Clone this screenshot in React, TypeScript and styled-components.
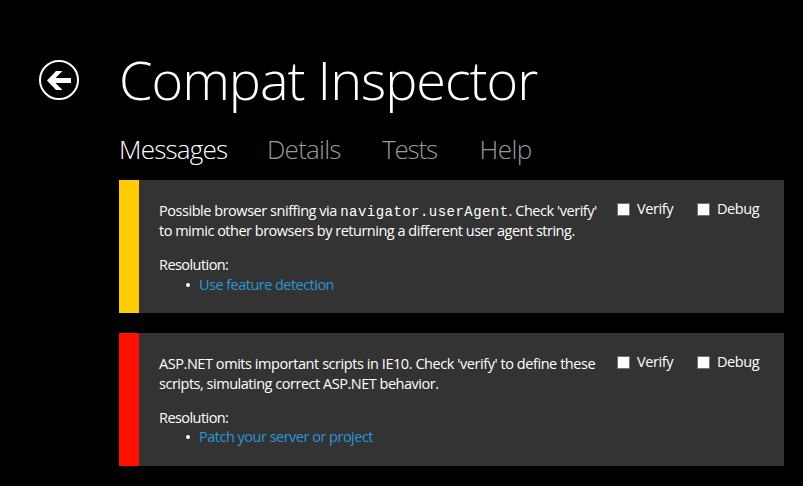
import React from 'react';
import styled, { createGlobalStyle } from 'styled-components';

const GlobalStyle = createGlobalStyle`
  * { box-sizing: border-box; }
  body {
    margin: 0;
    background: #000;
    color: #fff;
    font-family: "Open Sans", "Noto Sans", sans-serif;
    overflow: hidden;
  }
`;

const Page = styled.div`
  width: 803px;
  height: 486px;
  padding: 43px 19px 0 39px;
`;

const Header = styled.header`
  display: flex;
  height: 76px;
`;

const BackButton = styled.button`
  width: 40px;
  height: 40px;
  margin: 17px 40px 0 0;
  padding: 0;
  border: 0;
  background: none;
  color: #fff;
  svg { display: block; }
`;

const Title = styled.h1`
  margin: 0;
  font-size: 54px;
  line-height: 72px;
  font-weight: 300;
  letter-spacing: -1.02px;
  white-space: nowrap;
`;

const Main = styled.main`
  margin-left: 80px;
`;

const Tabs = styled.nav`
  display: flex;
  height: 61px;
`;

const Tab = styled.a<{ $active?: boolean; $width: number; $spacing: number }>`
  width: ${(p) => p.$width}px;
  color: ${(p) => (p.$active ? '#fff' : '#999')};
  font-size: 26px;
  line-height: 60px;
  font-weight: 300;
  letter-spacing: ${(p) => p.$spacing}px;
  white-space: nowrap;
`;

const Card = styled.section<{ $color: string }>`
  display: flex;
  justify-content: space-between;
  height: 133px;
  margin-bottom: 20px;
  padding: 21px 0 0 20px;
  border-left: 20px solid ${(p) => p.$color};
  background: #333;
  font-size: 14.5px;
  line-height: 20px;
`;

const Message = styled.div`
  width: 445px;
`;

const Line = styled.div<{ $spacing: number }>`
  letter-spacing: ${(p) => p.$spacing}px;
  white-space: nowrap;
`;

const Code = styled.code`
  font-family: "Liberation Mono", monospace;
  font-size: 14px;
  line-height: 1;
  letter-spacing: 0.46px;
`;

const Resolution = styled.div`
  margin-top: 14px;
  letter-spacing: -0.56px;
`;

const Fixes = styled.ul<{ $lineHeight: number }>`
  margin: 0;
  padding: 0 0 0 27px;
  list-style: none;
  line-height: ${(p) => p.$lineHeight}px;
  li {
    display: flex;
    align-items: center;
  }
  li::before {
    content: '';
    width: 4px;
    height: 4px;
    margin: 0 9px 0 0;
    border-radius: 50%;
    background: #fff;
  }
`;

const Link = styled.a<{ $spacing: number }>`
  color: #2a97d8;
  letter-spacing: ${(p) => p.$spacing}px;
`;

const Options = styled.div`
  display: flex;
  width: 167px;
  margin-top: -2px;
`;

const Option = styled.label`
  display: flex;
  width: 80px;
  height: 20px;
  letter-spacing: -0.4px;
`;

const Checkbox = styled.input`
  appearance: none;
  width: 13px;
  height: 13px;
  margin: 4px 7px 0 0;
  border: 1px solid #707070;
  background: #fff;
`;

function Toggles() {
  return (
    <Options>
      <Option><Checkbox type="checkbox" /><span>Verify</span></Option>
      <Option><Checkbox type="checkbox" /><span>Debug</span></Option>
    </Options>
  );
}

export default function App() {
  return (
    <>
      <GlobalStyle />
      <Page>
        <Header>
          <BackButton aria-label="Back">
            <svg width="40" height="40" viewBox="0 0 40 40" fill="none">
              <circle cx="20" cy="20" r="19" stroke="#fff" strokeWidth="2" />
              <path d="M8 20.5 17 11h6.5l-7 7H32v5H16.5l7 7H17Z" fill="#fff" />
            </svg>
          </BackButton>
          <Title>Compat Inspector</Title>
        </Header>
        <Main>
          <Tabs>
            <Tab $active $width={148} $spacing={-0.8}>Messages</Tab>
            <Tab $width={115} $spacing={-0.75}>Details</Tab>
            <Tab $width={97.5} $spacing={-1.2}>Tests</Tab>
            <Tab $width={60} $spacing={-0.55}>Help</Tab>
          </Tabs>
          <Card $color="#fc0">
            <Message>
              <Line $spacing={-0.46}>
                Possible browser sniffing via <Code>navigator.userAgent</Code>. Check 'verify'
              </Line>
              <Line $spacing={-0.49}>to mimic other browsers by returning a different user agent string.</Line>
              <Resolution>Resolution:</Resolution>
              <Fixes $lineHeight={20}>
                <li><Link $spacing={-0.53}>Use feature detection</Link></li>
              </Fixes>
            </Message>
            <Toggles />
          </Card>
          <Card $color="#f10">
            <Message>
              <Line $spacing={-0.44}>ASP.NET omits important scripts in IE10. Check 'verify' to define these</Line>
              <Line $spacing={-0.48}>scripts, simulating correct ASP.NET behavior.</Line>
              <Resolution>Resolution:</Resolution>
              <Fixes $lineHeight={18}>
                <li><Link $spacing={-0.5}>Patch your server or project</Link></li>
              </Fixes>
            </Message>
            <Toggles />
          </Card>
        </Main>
      </Page>
    </>
  );
}
